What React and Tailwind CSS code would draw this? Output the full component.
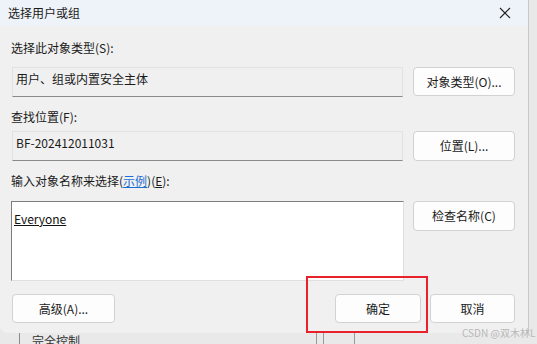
import React from 'react'

// Windows "选择用户或组" picker dialog, with the red annotation box on 确定.

const FONT = { fontFamily: '"Noto Sans CJK SC", "Noto Sans", sans-serif' }

function Btn({ children, className = '' }) {
  return (
    <div className={`flex items-center justify-center bg-[#fdfdfd] border border-[#d2d2d2] rounded-[4px] text-[12px] text-[#1a1a1a] ${className}`}>
      {children}
    </div>
  )
}

function Field({ children }) {
  return (
    <div className="w-[391px] h-[30px] bg-[#f0f0f0] border border-[#e2e2e2] border-b-[#8a8a8a] pl-[3px] pt-[3px] text-[12px] leading-[16px] text-[#1a1a1a]">
      {children}
    </div>
  )
}

export default function App() {
  return (
    <div className="w-[537px] h-[344px] relative overflow-hidden bg-[#e9e9e9]" style={FONT}>
      {/* background window peeking out below */}
      <div className="absolute left-0 top-[333px] w-[537px] h-[11px] flex text-[12px] text-[#333] leading-[20px]">
        <div className="w-[20px] border-r border-[#8a8a8a]" />
        <span className="pl-[12px] -mt-[2px]">完全控制</span>
        <div className="ml-[236px] w-[8px] border-x border-[#999]" />
        <div className="ml-[30px] w-[10px] border-l border-[#999]" />
      </div>

      <div className="w-[529px] h-[333px] bg-[#f0f0f0] border-r border-[#c8c8c8] rounded-bl-[8px] flex flex-col relative">
        {/* title bar */}
        <div className="h-[26px] bg-[#eef2f9] flex items-center justify-between pl-[8px] pr-[17px]">
          <span className="text-[12px] text-[#1a1a1a]">选择用户或组</span>
          <svg width="12" height="12" viewBox="0 0 12 12">
            <path d="M1 1 L11 11 M11 1 L1 11" stroke="#222" strokeWidth="1.1" />
          </svg>
        </div>

        <div className="flex flex-col pl-[11px]">
          <div className="mt-[14px] text-[12px] leading-[16px] text-[#1a1a1a]">选择此对象类型(S):</div>
          <div className="mt-[11px] flex items-start">
            <div className="ml-[1px]"><Field>用户、组或内置安全主体</Field></div>
            <Btn className="ml-[10px] w-[102px] h-[29px]">对象类型(O)...</Btn>
          </div>

          <div className="mt-[12px] text-[12px] leading-[16px] text-[#1a1a1a]">查找位置(F):</div>
          <div className="mt-[6px] flex items-start">
            <div className="ml-[1px]"><Field>BF-202412011031</Field></div>
            <Btn className="ml-[10px] w-[102px] h-[30px]">位置(L)...</Btn>
          </div>

          <div className="mt-[12px] text-[12px] leading-[16px] text-[#1a1a1a]">
            输入对象名称来选择(<span className="text-[#1a6fd0] underline">示例</span>)(<span className="underline">E</span>):
          </div>
          <div className="mt-[12px] flex items-start">
            <div className="w-[393px] h-[80px] bg-white border-[1.5px] border-[#7d7d7d] border-r-[#e0e0e0] border-b-[#e0e0e0] pl-[2px] pt-[9px] text-[12px] leading-[16px] text-[#111]">
              <span className="underline">Everyone</span>
            </div>
            <Btn className="ml-[9px] w-[102px] h-[30px]">检查名称(C)</Btn>
          </div>

          <div className="mt-[13px] flex items-start">
            <Btn className="ml-[1px] w-[103px] h-[29px]">高级(A)...</Btn>
            <Btn className="ml-[220px] w-[86px] h-[29px]">确定</Btn>
            <Btn className="ml-[9px] w-[85px] h-[29px]">取消</Btn>
          </div>
        </div>
      </div>

      {/* annotation */}
      <div className="absolute left-[306px] top-[276px] w-[122px] h-[57px] border-2 border-[#e8212b]" />
      <div className="absolute left-[462px] top-[326px] text-[10px] leading-[14px] text-[#b8b8b8]">CSDN @双木林L</div>
    </div>
  )
}
